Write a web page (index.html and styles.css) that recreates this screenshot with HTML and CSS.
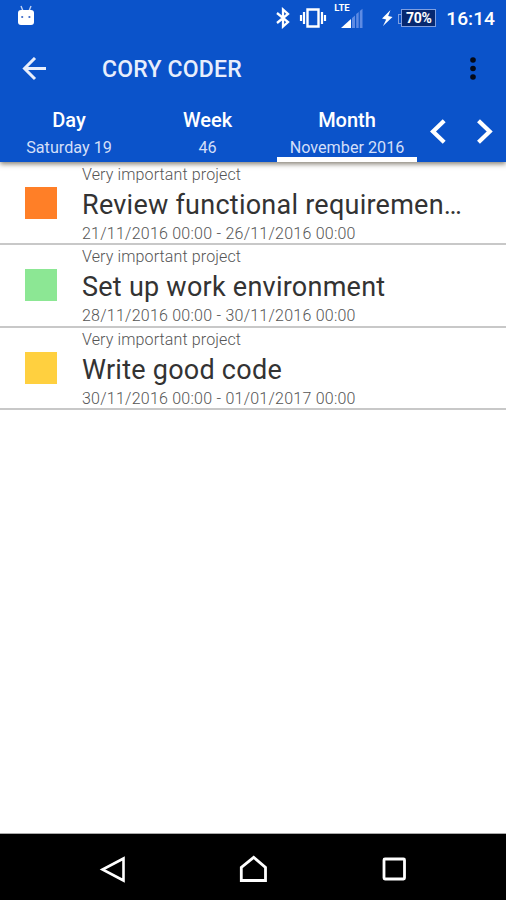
FILE: index.html
```html
<!DOCTYPE html>
<html lang="en">

<head>
  <meta charset="UTF-8">
  <meta name="viewport" content="width=device-width, initial-scale=1.0">
  <title>Cory Coder</title>
  <link rel="stylesheet" href="styles.css">
</head>

<body>
  <div class="screen">
    <header class="header">
      <div class="statusbar">
        <svg class="droid" width="18" height="22" viewBox="0 0 18 22">
          <path d="M4 1l2 5M14 1l-2 5" stroke="#c3d3f5" stroke-width="1.4" />
          <path d="M1 8q0-3 3-3h10q3 0 3 3v9q0 3-3 3H4q-3 0-3-3z" fill="#fff" />
          <circle cx="5.2" cy="12" r="1.1" fill="#3a68c8" />
          <circle cx="12.4" cy="12" r="1.1" fill="#3a68c8" />
        </svg>
        <div class="status-icons">
          <svg class="bluetooth" width="14" height="22" viewBox="0 0 14 22" fill="none" stroke="#fff" stroke-width="2.300">
            <path d="M1 6l11 9-5 4.500V2.500L12 7 1 16" />
          </svg>
          <svg class="vibrate" width="28" height="22" viewBox="0 0 28 22" fill="none" stroke="#fff" stroke-width="2">
            <path d="M8.500 2.500h11v17h-11z" stroke-width="2.400" />
            <path d="M5 5v12M23 5v12M2 8v6M26 8v6" stroke-width="2.200" />
          </svg>
          <div class="signal">
            <span class="lte">LTE</span>
            <svg width="22" height="22" viewBox="0 0 22 22">
              <path d="M0 21L10 12v9z" fill="#fff" />
              <path d="M11 11l3-2.500v12.500h-3zM15.200 7l2.500-2v16h-2.500zM18.800 4l2.700-2.300v19.300h-2.700z" fill="#5e8be3" />
            </svg>
          </div>
          <svg class="bolt" width="12" height="18" viewBox="0 0 12 18">
            <path d="M9.500 1L1 9.500l4.200 1L2 17 11.500 8l-4.300-1z" fill="#fff" />
          </svg>
          <div class="battery">70%</div>
          <div class="clock">16:14</div>
        </div>
      </div>

      <div class="toolbar">
        <svg class="back" width="24" height="24" viewBox="0 0 24 24" fill="none" stroke="#e8eefc" stroke-width="3">
          <path d="M24 11.500H3M13 1L2.500 11.500 13 22" />
        </svg>
        <h1 class="title">CORY CODER</h1>
        <svg class="more" width="6" height="24" viewBox="0 0 6 24" fill="#050a18">
          <circle cx="3" cy="3" r="2.800" />
          <circle cx="3" cy="11.500" r="2.800" />
          <circle cx="3" cy="20" r="2.800" />
        </svg>
      </div>

      <nav class="tabs">
        <div class="tab">
          <div class="tab-name">Day</div>
          <div class="tab-date">Saturday 19</div>
        </div>
        <div class="tab">
          <div class="tab-name">Week</div>
          <div class="tab-date">46</div>
        </div>
        <div class="tab active">
          <div class="tab-name">Month</div>
          <div class="tab-date">November 2016</div>
        </div>
        <div class="arrows">
          <svg width="16" height="26" viewBox="0 0 16 26" fill="none" stroke="#fff" stroke-width="4.200">
            <path d="M14.200 1.800L3 12.500l11.200 10.700" />
          </svg>
          <svg width="16" height="26" viewBox="0 0 16 26" fill="none" stroke="#fff" stroke-width="4.200">
            <path d="M1.500 1.800L12.700 12.500 1.500 23.200" />
          </svg>
        </div>
      </nav>
    </header>

    <main class="list">
      <div class="item">
        <div class="color orange"></div>
        <div class="texts">
          <div class="project">Very important project</div>
          <div class="task">Review functional requiremen…</div>
          <div class="dates">21/11/2016 00:00 - 26/11/2016 00:00</div>
        </div>
      </div>
      <div class="item">
        <div class="color green"></div>
        <div class="texts">
          <div class="project">Very important project</div>
          <div class="task">Set up work environment</div>
          <div class="dates">28/11/2016 00:00 - 30/11/2016 00:00</div>
        </div>
      </div>
      <div class="item">
        <div class="color yellow"></div>
        <div class="texts">
          <div class="project">Very important project</div>
          <div class="task">Write good code</div>
          <div class="dates">30/11/2016 00:00 - 01/01/2017 00:00</div>
        </div>
      </div>
    </main>

    <footer class="navbar">
      <svg width="28" height="30" viewBox="0 0 28 30" fill="none" stroke="#fff" stroke-width="2.600">
        <path d="M25.500 3.500v22L4.500 14.500z" />
      </svg>
      <svg width="28" height="30" viewBox="0 0 28 30" fill="none" stroke="#fff" stroke-width="2.800">
        <path d="M2.300 25.500V12.500L14.700 2.300 26.500 12.500v13z" />
      </svg>
      <svg width="28" height="30" viewBox="0 0 28 30" fill="none" stroke="#fff" stroke-width="2.800">
        <rect x="4" y="4" width="20.500" height="20" rx="1" />
      </svg>
    </footer>
  </div>
</body>

</html>
```
FILE: styles.css
```css
* {
  box-sizing: border-box;
}

body {
  margin: 0;
  font-family: Roboto, sans-serif;
  background-color: #fff;
}

svg {
  display: block;
  flex: none;
}

.screen {
  width: 506px;
  height: 900px;
  display: flex;
  flex-direction: column;
  overflow: hidden;
}

.header {
  height: 162px;
  background-color: #0b53ca;
  color: #fff;
  box-shadow: 0 2px 5px rgba(50, 40, 20, 0.6);
}

.statusbar {
  height: 34px;
  display: flex;
  justify-content: space-between;
  padding: 5px 11px 0 17px;
}

.status-icons {
  display: flex;
  height: 25px;
  align-items: center;
}

.vibrate {
  margin-left: 9px;
}

.signal {
  display: flex;
  margin: 1px 0 0 14px;
  position: relative;
}

.lte {
  position: absolute;
  top: -4px;
  left: -7px;
  font-size: 9.5px;
  line-height: 10px;
  font-weight: bold;
}

.bolt {
  margin-left: 18px;
}

.battery {
  position: relative;
  width: 35px;
  height: 18px;
  margin-left: 8px;
  border: 1px solid #7f9fe0;
  background-color: #062870;
  font-size: 14px;
  line-height: 16px;
  font-weight: bold;
  letter-spacing: -0.3px;
  text-align: center;
}

.battery::before {
  content: '';
  position: absolute;
  left: -4px;
  top: 4px;
  width: 3px;
  height: 8px;
  border: 1px solid #7f9fe0;
  border-right: none;
}

.clock {
  margin: 2px 0 0 10px;
  font-size: 19.2px;
  font-weight: 500;
}

.toolbar {
  height: 69px;
  display: flex;
  align-items: center;
  padding: 0 30px 0 22px;
}

.title {
  flex: 1;
  margin: 2px 0 0 56px;
  font-size: 23px;
  font-weight: 500;
  letter-spacing: 0.2px;
  color: #e8eefc;
}

.tabs {
  height: 59px;
  display: grid;
  grid-template-columns: 138px 139px 140px 1fr;
}

.tab {
  text-align: center;
  padding-top: 4px;
}

.tab-name {
  font-size: 20px;
  line-height: 26px;
  font-weight: 500;
}

.tab-date {
  font-size: 16.2px;
  line-height: 18px;
  margin-top: 6px;
  color: #d3dff8;
}

.active {
  border-bottom: 5px solid #fff;
}

.arrows {
  display: flex;
  justify-content: space-between;
  align-items: center;
  padding: 0 13px 1px 13px;
}

.list {
  flex: 1;
  padding-top: 1px;
}

.item {
  height: 82.3px;
  display: flex;
  border-bottom: 2px solid #c8c8c8;
}

.color {
  width: 32px;
  height: 32px;
  margin: 24px 25px 0 25px;
}

.orange {
  background-color: #ff7f27;
}

.green {
  background-color: #8ce794;
}

.yellow {
  background-color: #ffd03f;
}

.project,
.dates {
  font-size: 16px;
  font-weight: 300;
  line-height: 20px;
  color: #555;
}

.project {
  margin-top: 2px;
  letter-spacing: 0.13px;
}

.dates {
  letter-spacing: 0.24px;
}

.task {
  padding-top: 1px;
  font-size: 27px;
  line-height: 38px;
  letter-spacing: 0.25px;
  color: #333;
  white-space: nowrap;
}

.navbar {
  height: 67px;
  display: flex;
  justify-content: space-between;
  padding: 21px 98px 0;
  border-top: 1px solid #aaa;
  background-color: #000;
}
```
